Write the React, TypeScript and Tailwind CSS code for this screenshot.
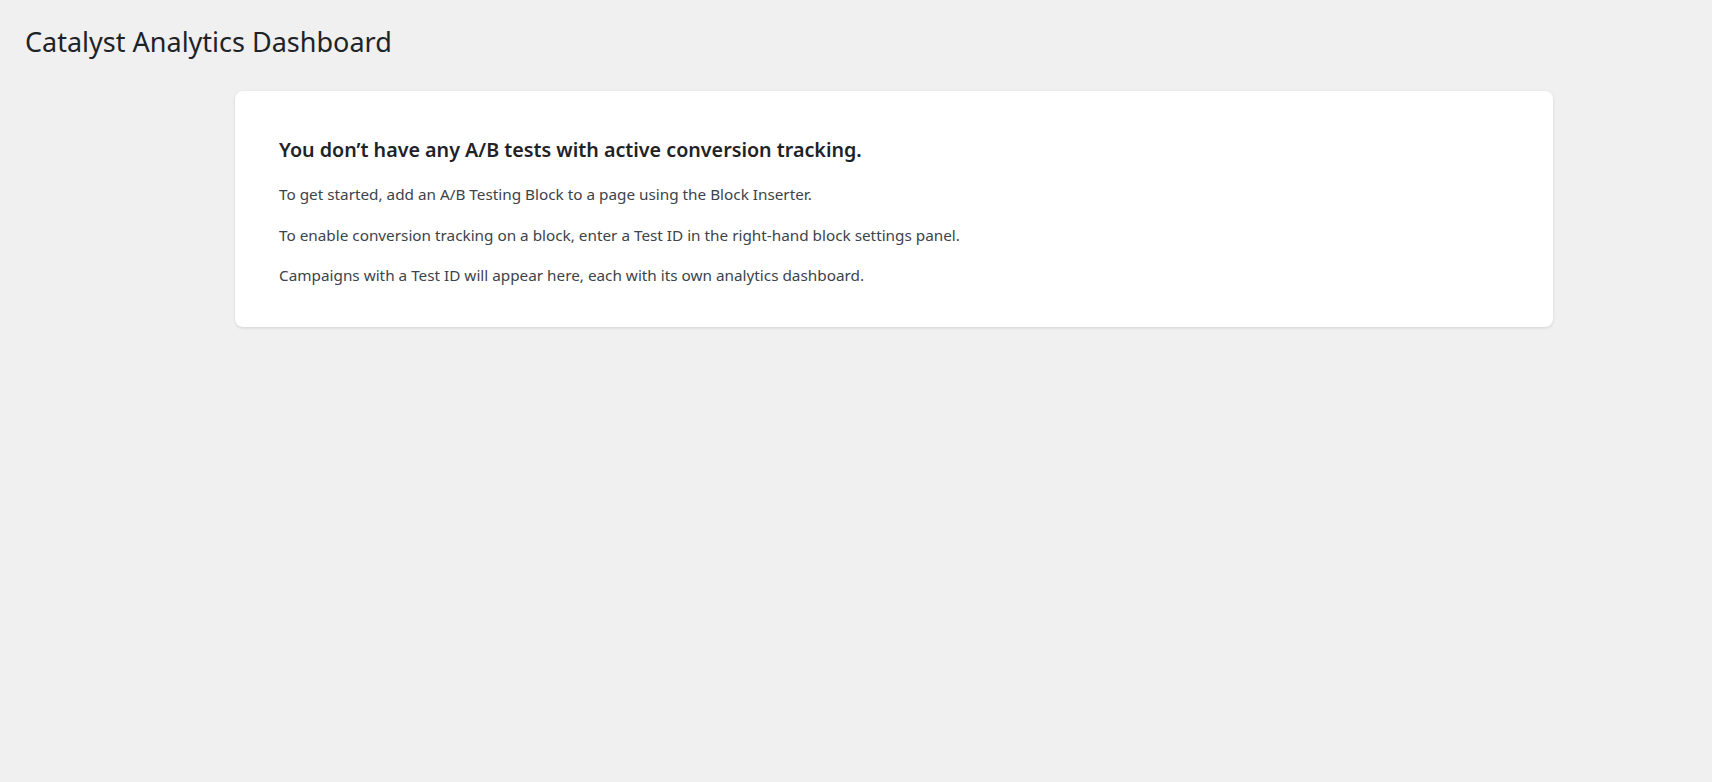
export default function App() {
  return (
    <div className="min-h-[782px] bg-[#f0f0f1] font-['Noto_Sans',sans-serif]">
      <div className="px-[25px] pt-[22px]">
        <h1 className="text-[27px] leading-[40px] font-normal text-[#1d2327]">Catalyst Analytics Dashboard</h1>
      </div>
      <div className="ml-[235px] mt-[29px] w-[1318px] rounded-[8px] bg-white px-[44px] pt-[46px] pb-[41px] shadow-[0_1px_3px_rgba(0,0,0,0.12)]">
        <h2 className="text-[19.7px] leading-[26px] font-semibold text-[#1d2327]">You don’t have any A/B tests with active conversion tracking.</h2>
        <div className="mt-[20px] flex flex-col gap-[18.5px] text-[15.3px] leading-[22px] text-[#3c434a]">
          <p>To get started, add an A/B Testing Block to a page using the Block Inserter.</p>
          <p>To enable conversion tracking on a block, enter a Test ID in the right-hand block settings panel.</p>
          <p>Campaigns with a Test ID will appear here, each with its own analytics dashboard.</p>
        </div>
      </div>
    </div>
  )
}
